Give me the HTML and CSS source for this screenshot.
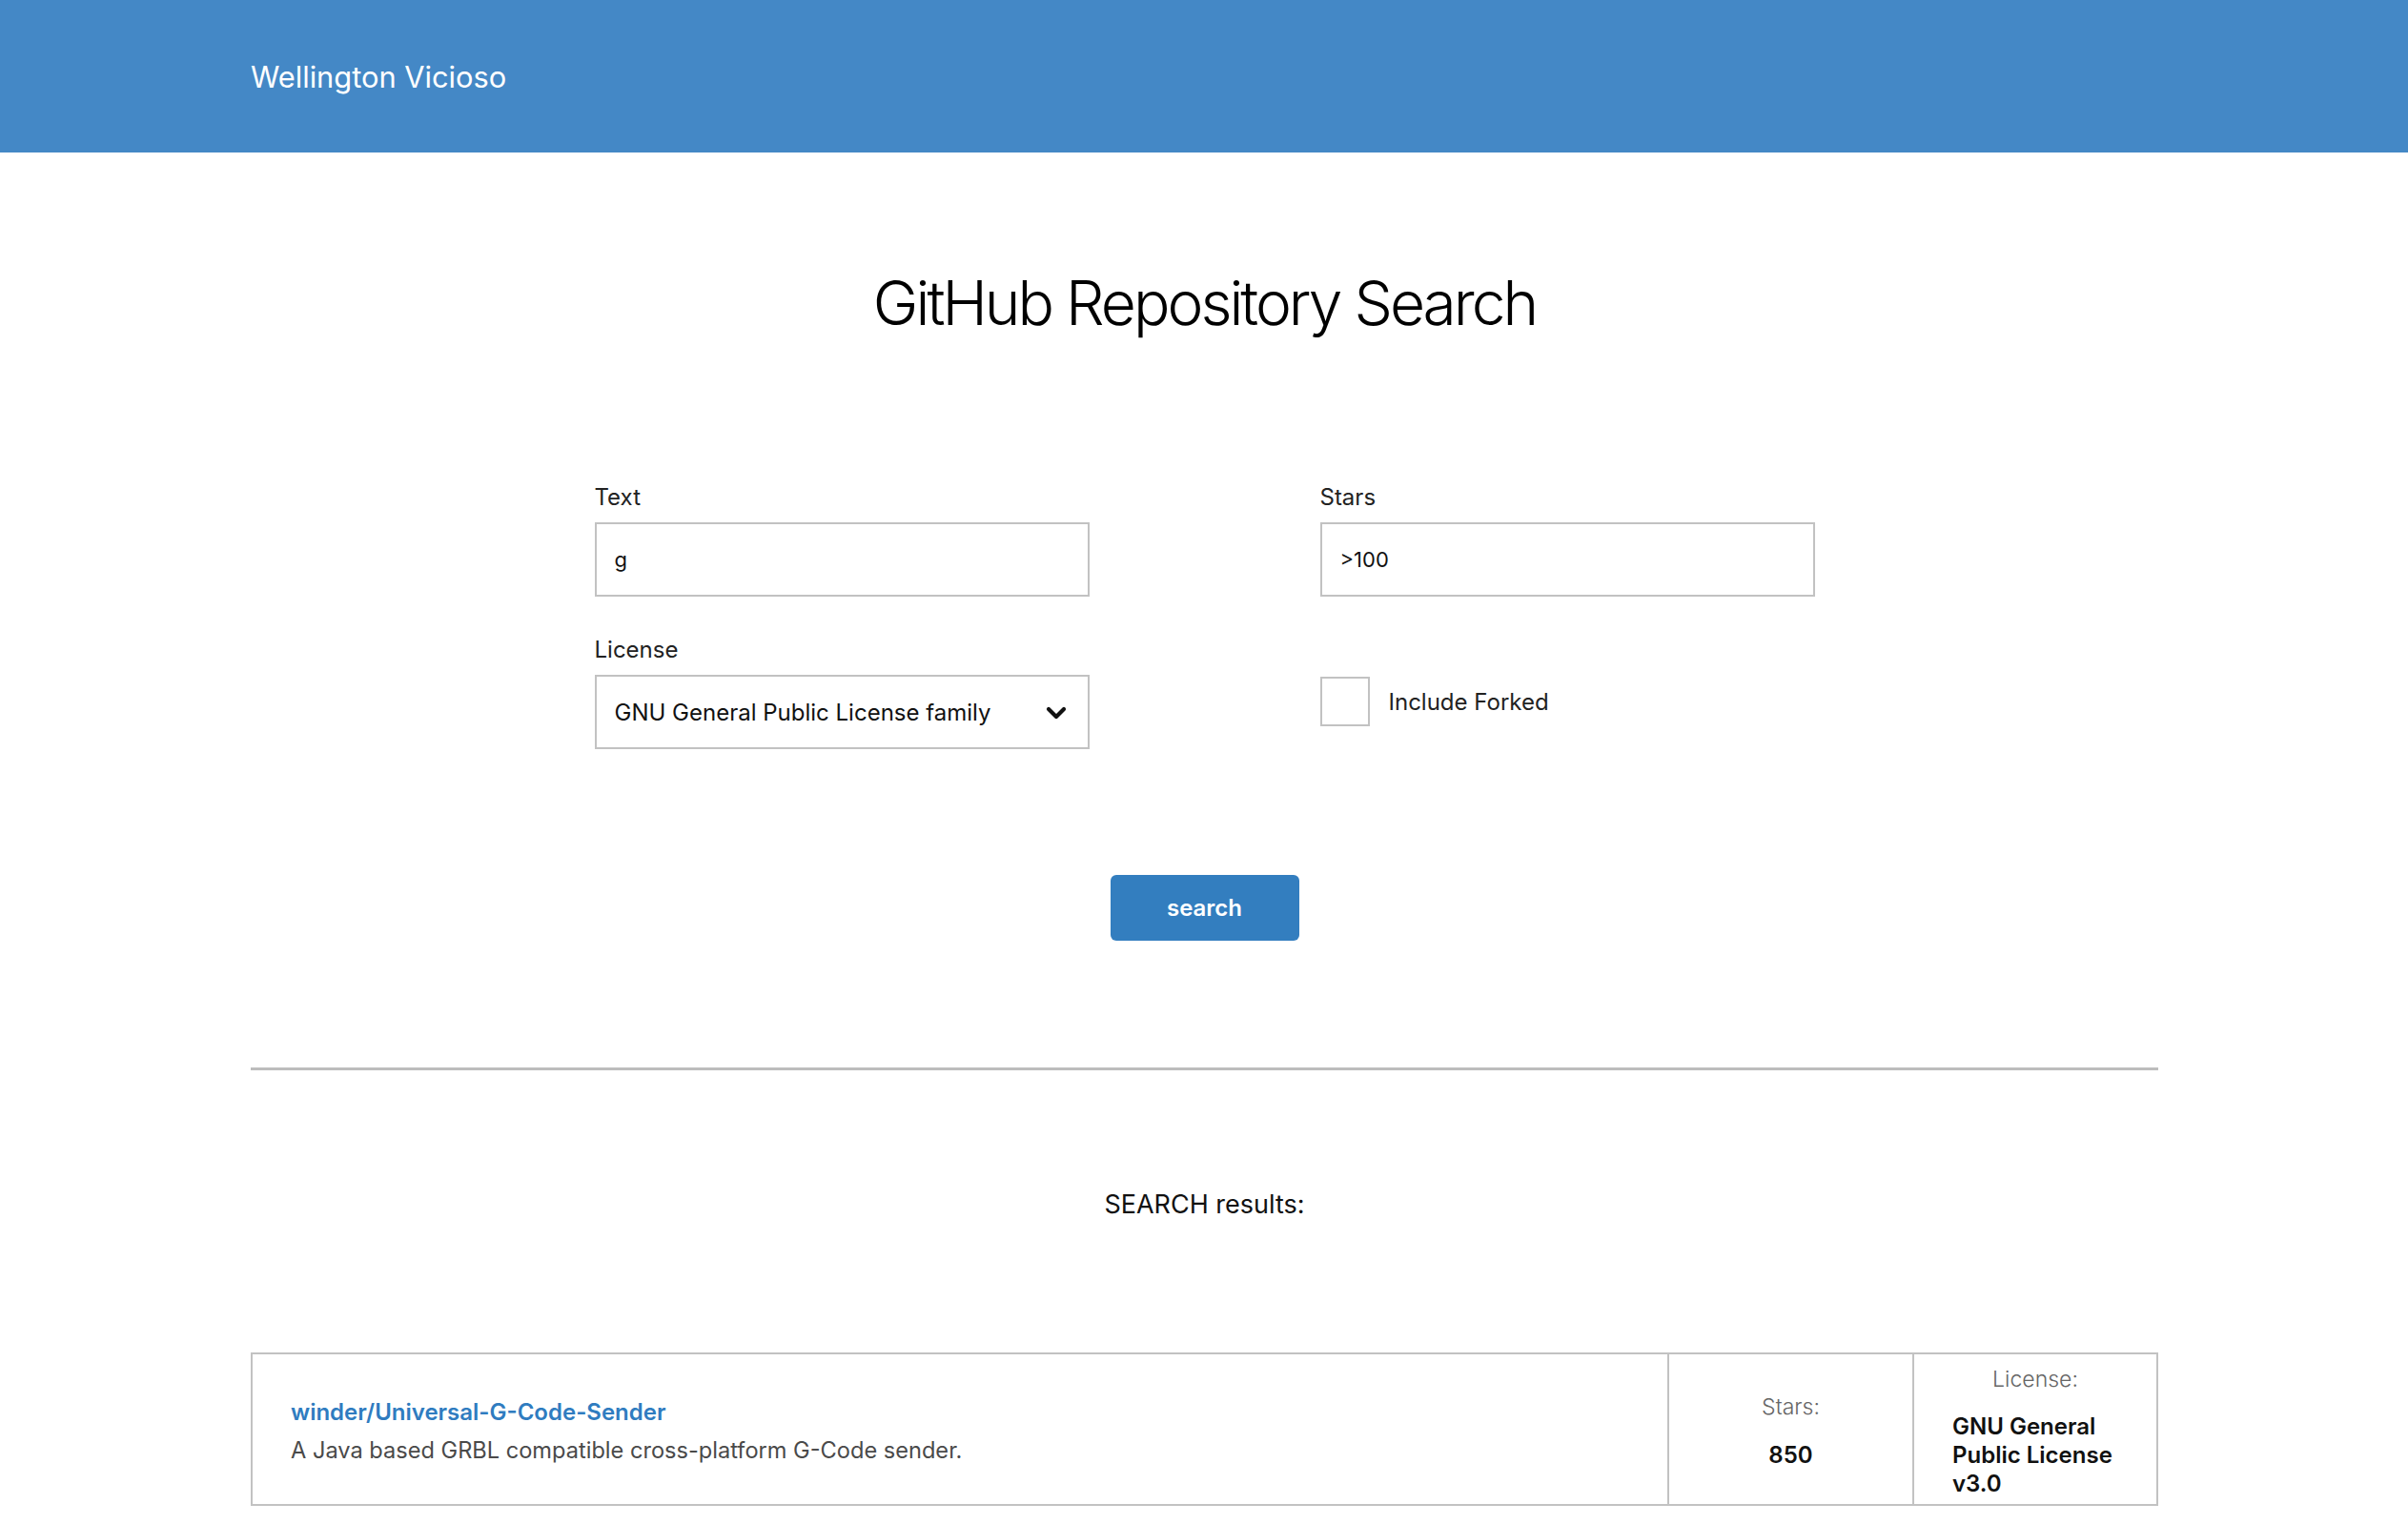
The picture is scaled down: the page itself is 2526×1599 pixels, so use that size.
FILE: index.html
```html
<!DOCTYPE html>
<html lang="en">
<head>
<meta charset="utf-8">
<title>GitHub Repository Search</title>
<link rel="stylesheet" href="styles.css">
</head>
<body>
<header class="topbar">
  <div class="container">
    <span class="brand">Wellington Vicioso</span>
  </div>
</header>
<main class="container">
  <h1 class="title">GitHub Repository Search</h1>
  <form class="search-form">
    <div class="field">
      <label class="label" for="q">Text</label>
      <input class="input" id="q" type="text" value="g">
    </div>
    <div class="field">
      <label class="label" for="stars">Stars</label>
      <input class="input" id="stars" type="text" value="&gt;100">
    </div>
    <div class="field">
      <label class="label">License</label>
      <div class="select">
        <span class="select-value">GNU General Public License family</span>
        <svg class="chevron" width="22" height="14" viewBox="0 0 22 14"><polyline points="3,3 11,11 19,3" fill="none" stroke="#111" stroke-width="4.2" stroke-linecap="round" stroke-linejoin="round"/></svg>
      </div>
    </div>
    <div class="field check-field">
      <label class="check">
        <input class="checkbox" type="checkbox">
        <span class="check-text">Include Forked</span>
      </label>
    </div>
  </form>
  <div class="actions">
    <button class="btn" type="button">search</button>
  </div>
  <hr class="divider">
  <p class="results-title">SEARCH results:</p>
  <div class="result">
    <div class="result-main">
      <a class="repo-link" href="#">winder/Universal-G-Code-Sender</a>
      <p class="repo-desc">A Java based GRBL compatible cross-platform G-Code sender.</p>
    </div>
    <div class="result-stars">
      <span class="meta-label">Stars:</span>
      <span class="meta-value">850</span>
    </div>
    <div class="result-license">
      <span class="meta-label">License:</span>
      <span class="license-value">GNU General Public License v3.0</span>
    </div>
  </div>
</main>
</body>
</html>
```

FILE: styles.css
```css
* { box-sizing: border-box; }

body {
  margin: 0;
  font-family: Inter, "Noto Sans", "Liberation Sans", sans-serif;
  color: #111;
  background: #fff;
}

.container {
  width: 2002px;
  margin: 0 auto;
  padding-left: 1px;
}

.topbar {
  background: #4488c6;
  height: 160px;
  display: flex;
  align-items: center;
}

.brand {
  color: #fff;
  font-size: 30.8px;
  font-weight: 400;
  line-height: 40px;
  display: block;
  padding-top: 2px;
}

.title {
  margin: 119px 0 0;
  text-align: center;
  font-size: 64px;
  font-weight: 300;
  letter-spacing: -3px;
  line-height: 77px;
  color: #000;
}

.search-form {
  width: 1280px;
  margin: 151px auto 0;
  display: grid;
  grid-template-columns: 519px 519px;
  column-gap: 242px;
  row-gap: 41px;
}

.field {
  display: flex;
  flex-direction: column;
}

.label {
  font-size: 24px;
  line-height: 30px;
  color: #222;
  margin-bottom: 11px;
}

.input {
  height: 78px;
  border: 2px solid #c2c2c2;
  border-radius: 0;
  padding: 0 19px;
  font-family: inherit;
  font-size: 22px;
  color: #111;
  outline: none;
  background: #fff;
}

.select {
  height: 78px;
  border: 2px solid #c2c2c2;
  padding: 0 22px 0 19px;
  display: flex;
  align-items: center;
  justify-content: space-between;
  font-size: 24px;
  color: #111;
}

.chevron { display: block; margin-top: 2px; }

.check-field {
  padding-top: 43px;
}

.check {
  display: flex;
  align-items: center;
  gap: 20px;
}

.checkbox {
  appearance: none;
  -webkit-appearance: none;
  width: 52px;
  height: 52px;
  margin: 0;
  border: 2px solid #c2c2c2;
  background: #fff;
}

.check-text {
  font-size: 24px;
  color: #222;
}

.actions {
  display: flex;
  justify-content: center;
  margin-top: 132px;
}

.btn {
  width: 198px;
  height: 69px;
  border: none;
  border-radius: 6px;
  background: #337ebf;
  color: #fff;
  font-family: inherit;
  font-size: 24px;
  font-weight: 600;
  padding: 0;
}

.divider {
  margin: 133px 0 0;
  border: none;
  border-top: 3px solid #bdbdbd;
  height: 0;
}

.results-title {
  margin: 124px 0 0;
  text-align: center;
  font-size: 27px;
  line-height: 34px;
  color: #111;
}

.result {
  margin-top: 138px;
  border: 2px solid #c2c2c2;
  display: grid;
  grid-template-columns: 1484px 257px 1fr;
}

.result-main {
  padding: 5px 40px 0;
  display: flex;
  flex-direction: column;
  justify-content: center;
}

.repo-link {
  color: #2f7cc0;
  text-decoration: none;
  font-size: 24px;
  font-weight: 600;
  line-height: 30px;
}

.repo-desc {
  margin: 10px 0 0;
  font-size: 23.6px;
  line-height: 30px;
  color: #4a4a4a;
}

.result-stars {
  border-left: 2px solid #c2c2c2;
  display: flex;
  flex-direction: column;
  align-items: center;
  justify-content: center;
  gap: 21px;
  padding-top: 3px;
}

.meta-label {
  font-size: 23px;
  line-height: 30px;
  color: #666;
  font-weight: 300;
}

.meta-value {
  font-size: 24px;
  line-height: 30px;
  font-weight: 600;
  color: #111;
}

.result-license {
  border-left: 2px solid #c2c2c2;
  display: flex;
  flex-direction: column;
  align-items: center;
  padding: 11px 40px 6px;
  gap: 20px;
}

.license-value {
  align-self: stretch;
  font-size: 24px;
  line-height: 30px;
  font-weight: 600;
  color: #111;
}
```
